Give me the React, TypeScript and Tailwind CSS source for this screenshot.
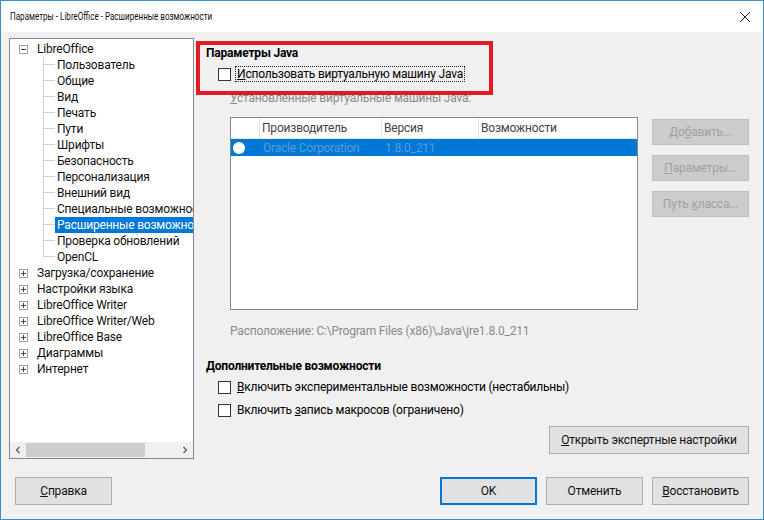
import React from "react"

const font = "font-['Roboto','Noto_Sans',sans-serif] tracking-[-0.2px]"

type Node = { label: string; open?: boolean; children?: string[] }

const tree: Node[] = [
  {
    label: "LibreOffice",
    open: true,
    children: [
      "Пользователь",
      "Общие",
      "Вид",
      "Печать",
      "Пути",
      "Шрифты",
      "Безопасность",
      "Персонализация",
      "Внешний вид",
      "Специальные возможности",
      "Расширенные возможности",
      "Проверка обновлений",
      "OpenCL",
    ],
  },
  { label: "Загрузка/сохранение" },
  { label: "Настройки языка" },
  { label: "LibreOffice Writer" },
  { label: "LibreOffice Writer/Web" },
  { label: "LibreOffice Base" },
  { label: "Диаграммы" },
  { label: "Интернет" },
]

function Expander({ open }: { open?: boolean }) {
  return (
    <div className="relative w-[9px] h-[9px] border border-[#a0a0a0] bg-white">
      <div className="absolute left-[1px] top-[3px] w-[5px] h-px bg-[#404040]" />
      {!open && <div className="absolute left-[3px] top-[1px] w-px h-[5px] bg-[#404040]" />}
    </div>
  )
}

function Check({ label, mn, rest, focus }: { label: string; mn: string; rest: string; focus?: boolean }) {
  return (
    <div className="flex items-center h-[16px]">
      <div className="w-[13px] h-[13px] border border-[#333] bg-white" />
      <span className={`ml-[4px] px-[1px] leading-[14px] ${focus ? "border border-dotted border-[#222]" : "border border-transparent"}`}>
        {label}
        <span className="underline">{mn}</span>
        {rest}
      </span>
    </div>
  )
}

function SideButton({ children }: { children: React.ReactNode }) {
  return (
    <div className="w-[97px] h-[26px] bg-[#cccccc] border border-[#bfbfbf] flex items-center justify-center text-[#a0a0a0]">
      <span>{children}</span>
    </div>
  )
}

function Button({ children, w, primary }: { children: React.ReactNode; w: string; primary?: boolean }) {
  return (
    <div
      className={`${w} h-[28px] bg-[#e1e1e1] flex items-center justify-center text-[#111] ${
        primary ? "border-2 border-[#0078d7]" : "border border-[#adadad]"
      }`}
    >
      <span>{children}</span>
    </div>
  )
}

export default function App() {
  return (
    <div className={`${font} w-[764px] h-[520px] text-[12px] text-black bg-[#f0f0f0] border border-[#3a8ec9] flex flex-col overflow-hidden`}>
      {/* title bar */}
      <div className="h-[31px] bg-white flex items-center justify-between pl-[9px] pr-[12px] shrink-0">
        <span className="text-[11.5px] tracking-normal text-[#111] whitespace-nowrap origin-left scale-x-[0.7]">
          Параметры - LibreOffice - Расширенные возможности
        </span>
        <svg width="12" height="12" viewBox="0 0 12 12">
          <path d="M1 1 L11 11 M11 1 L1 11" stroke="#222" strokeWidth="1" />
        </svg>
      </div>

      <div className="flex flex-1">
        {/* tree panel */}
        <div className="ml-[8px] mt-[6px] w-[185px] h-[421px] border border-[#828790] bg-white flex flex-col">
          <div className="flex-1 pt-[2px] overflow-hidden">
            {tree.map((n) => (
              <div key={n.label}>
                <div className="flex items-center h-[16px] whitespace-nowrap">
                  <div className="w-[27px] pl-[9px] flex items-center">
                    <Expander open={n.open} />
                  </div>
                  <span className="text-[#111]">{n.label}</span>
                </div>
                {n.open &&
                  n.children!.map((c, i) => {
                    const last = i === n.children!.length - 1
                    const sel = c === "Расширенные возможности"
                    return (
                      <div key={c} className="flex h-[16px] whitespace-nowrap">
                        <div className="w-[33px] shrink-0" />
                        <div className="w-[12px] shrink-0 flex flex-col">
                          <div className="h-[8px] border-l border-b border-[#d0d0d0]" />
                          <div className={`h-[8px] ${last ? "" : "border-l border-[#d0d0d0]"}`} />
                        </div>
                        <div className={`flex-1 pl-[2px] flex items-center overflow-hidden ${sel ? "bg-[#0078d7] text-white" : "text-[#111]"}`}>
                          {c}
                        </div>
                      </div>
                    )
                  })}
              </div>
            ))}
          </div>
          {/* horizontal scrollbar */}
          <div className="h-[16px] bg-[#f0f0f0] flex items-center">
            <div className="w-[16px] flex justify-center">
              <svg width="6" height="8" viewBox="0 0 6 8">
                <path d="M4.5 1 L1.5 4 L4.5 7" stroke="#606060" strokeWidth="1.3" fill="none" />
              </svg>
            </div>
            <div className="w-[119px] h-[14px] bg-[#cdcdcd]" />
            <div className="flex-1" />
            <div className="w-[16px] flex justify-center">
              <svg width="6" height="8" viewBox="0 0 6 8">
                <path d="M1.5 1 L4.5 4 L1.5 7" stroke="#606060" strokeWidth="1.3" fill="none" />
              </svg>
            </div>
          </div>
        </div>

        {/* right column */}
        <div className="relative flex-1 pl-[12px] pr-[15px] pt-[13px] flex flex-col">
          <div className="absolute left-[2px] top-[9px] w-[297px] h-[54px] border-[4px] border-[#e21b23] pointer-events-none z-10" />

          <div className="font-bold h-[16px] leading-[16px]">Параметры Java</div>
          <div className="mt-[5px] ml-[12px]">
            <Check label="" mn="И" rest="спользовать виртуальную машину Java" focus />
          </div>
          <div className="mt-[8px] ml-[24px] h-[16px] leading-[16px] text-[#8a8a8a]">
            <span className="underline">У</span>становленные виртуальные машины Java:
          </div>

          <div className="mt-[11px] ml-[24px] flex">
            <div className="w-[408px] h-[193px] border border-[#828790] bg-white">
              <div className="flex h-[21px] border-b border-[#e5e5e5] text-[#444]">
                <div className="w-[29px] border-r border-[#e5e5e5]" />
                <div className="w-[122px] border-r border-[#e5e5e5] pl-[2px] flex items-center">Производитель</div>
                <div className="w-[97px] border-r border-[#e5e5e5] pl-[2px] flex items-center">Версия</div>
                <div className="flex-1 pl-[2px] flex items-center">Возможности</div>
              </div>
              <div className="flex h-[17px] bg-[#0078d7] text-[#5e9ad6]">
                <div className="w-[29px] flex items-center pl-[2px]">
                  <div className="w-[12px] h-[12px] rounded-full bg-white" />
                </div>
                <div className="w-[122px] pl-[3px] flex items-center">Oracle Corporation</div>
                <div className="w-[97px] pl-[3px] flex items-center">1.8.0_211</div>
              </div>
            </div>
            <div className="ml-[14px] mt-[2px] flex flex-col gap-[10px]">
              <SideButton>
                До<span className="underline">б</span>авить...
              </SideButton>
              <SideButton>
                <span className="underline">П</span>араметры...
              </SideButton>
              <SideButton>
                Путь <span className="underline">к</span>ласса...
              </SideButton>
            </div>
          </div>

          <div className="mt-[13px] ml-[24px] h-[16px] leading-[16px] text-[#8a8a8a]">
            Расположение: C:\Program Files (x86)\Java\jre1.8.0_211
          </div>

          <div className="mt-[19px] font-bold h-[16px] leading-[16px]">Дополнительные возможности</div>
          <div className="mt-[5px] ml-[12px] flex flex-col gap-[7px]">
            <Check label="" mn="В" rest="ключить экспериментальные возможности (нестабильны)" />
            <Check label="Включить " mn="з" rest="апись макросов (ограничено)" />
          </div>

          <div className="mt-[8px] flex justify-end">
            <Button w="w-[200px]">
              <span className="underline">О</span>ткрыть экспертные настройки
            </Button>
          </div>
        </div>
      </div>

      {/* bottom buttons */}
      <div className="h-[42px] flex items-start px-[14px] shrink-0">
        <Button w="w-[97px]">
          <span className="underline">С</span>правка
        </Button>
        <div className="flex-1" />
        <div className="flex gap-[9px]">
          <Button w="w-[97px]" primary>
            OK
          </Button>
          <Button w="w-[97px]">Отменить</Button>
          <Button w="w-[97px]">
            <span className="underline">В</span>осстановить
          </Button>
        </div>
      </div>
    </div>
  )
}
